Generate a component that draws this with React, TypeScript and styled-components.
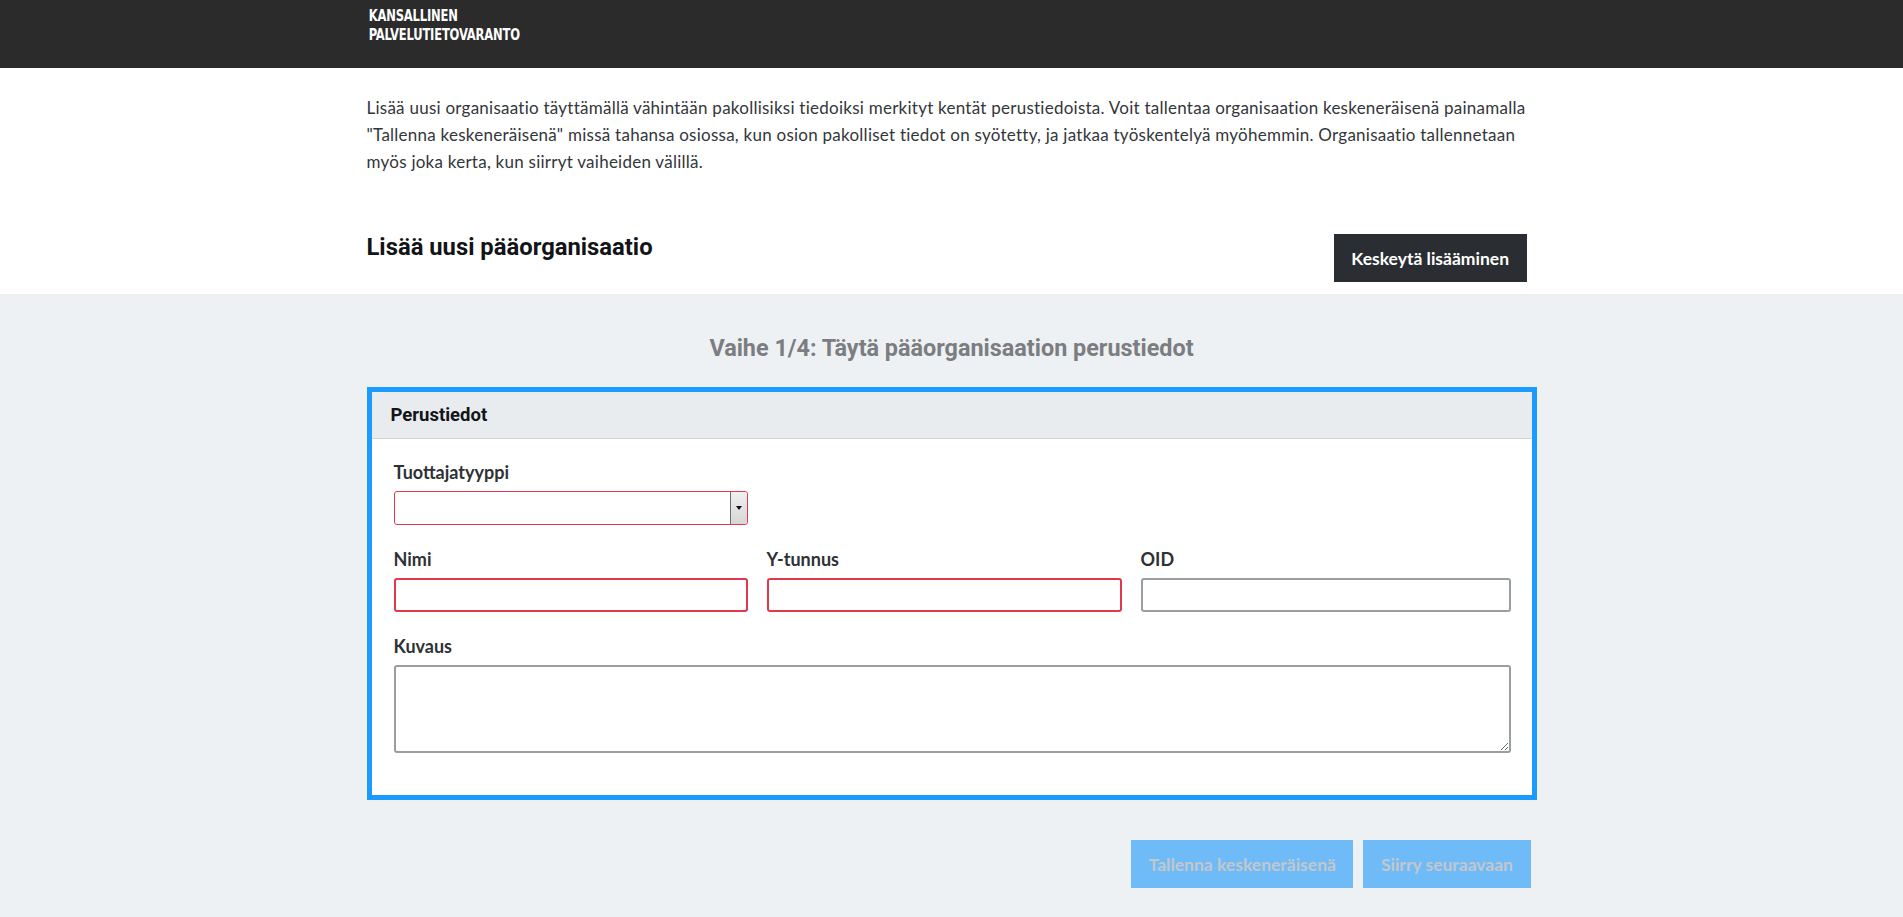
import styled, { createGlobalStyle } from 'styled-components';

const GlobalStyle = createGlobalStyle`
  html, body {
    margin: 0;
    padding: 0;
    background: #edf1f4;
    font-family: Lato, 'Open Sans', sans-serif;
    color: #33363a;
  }
  * {
    box-sizing: border-box;
  }
`;

const Container = styled.div`
  width: 1170px;
  margin: 0 auto;
`;

const TopBar = styled.header`
  height: 68px;
  background: #2b2b2b;
`;

const Logo = styled.div`
  padding: 7px 0 0 2px;
  font-family: 'Liberation Sans Narrow', 'DejaVu Sans Condensed', sans-serif;
  font-weight: 700;
  font-size: 15px;
  line-height: 19px;
  letter-spacing: -0.2px;
  color: #ffffff;
  text-transform: uppercase;
  transform: scaleX(0.855);
  transform-origin: left top;
`;

const IntroSection = styled.section`
  background: #ffffff;
  padding-bottom: 12px;
`;

const Intro = styled.p`
  margin: 0;
  padding-top: 26px;
  font-size: 17px;
  letter-spacing: 0.25px;
  line-height: 27px;
  color: #33363a;
`;

const TitleRow = styled.div`
  display: flex;
  justify-content: space-between;
  align-items: flex-start;
  margin-top: 59px;
  padding-right: 10px;
`;

const PageTitle = styled.h1`
  margin: 0;
  font-family: Roboto, sans-serif;
  font-weight: 700;
  font-size: 23.8px;
  line-height: 26px;
  color: #121417;
`;

const Button = styled.button<{ variant: 'dark' | 'disabled' }>`
  height: 48px;
  padding: 0 17.5px;
  border: none;
  border-radius: 0;
  font-family: Lato, sans-serif;
  font-weight: 700;
  font-size: 17.5px;
  cursor: ${(p) => (p.variant === 'disabled' ? 'default' : 'pointer')};
  background: ${(p) => (p.variant === 'dark' ? '#2a2d32' : '#6fbbf8')};
  color: ${(p) => (p.variant === 'dark' ? '#ffffff' : '#c3c7cb')};
`;

const Main = styled.main`
  padding-top: 41px;
  padding-bottom: 30px;
`;

const StepTitle = styled.h2`
  margin: 0;
  text-align: center;
  font-family: Roboto, sans-serif;
  font-weight: 700;
  font-size: 23.4px;
  line-height: 26px;
  color: #7b7d80;
`;

const Card = styled.div`
  margin-top: 26px;
  border: 5px solid #1c9bff;
  background: #ffffff;
`;

const CardHeader = styled.div`
  height: 47px;
  padding-left: 19px;
  background: #e9ecef;
  border-bottom: 1px solid #cfd3d7;
  font-family: Roboto, sans-serif;
  font-weight: 700;
  font-size: 18.5px;
  line-height: 46px;
  color: #121417;
`;

const CardBody = styled.div`
  padding: 23px 21px 42px 22px;
  display: flex;
  flex-direction: column;
  gap: 24px;
`;

const FieldRow = styled.div`
  display: grid;
  grid-template-columns: 354px 355px 1fr;
  column-gap: 19px;
`;

const Field = styled.div<{ width?: number }>`
  display: flex;
  flex-direction: column;
  gap: 9px;
  width: ${(p) => (p.width ? `${p.width}px` : 'auto')};
`;

const Label = styled.label`
  font-weight: 700;
  font-size: 18px;
  line-height: 20px;
  color: #2e3135;
`;

const SelectBox = styled.div`
  display: flex;
  height: 34px;
  border: 1px solid #e0384c;
  border-radius: 3px;
  background: #ffffff;
  overflow: hidden;
`;

const SelectValue = styled.div`
  flex: 1;
`;

const SelectArrow = styled.div`
  width: 17px;
  display: flex;
  align-items: center;
  justify-content: center;
  border-left: 1px solid #6d6d6d;
  background: linear-gradient(#f0f0f0, #d6d6d6);

  &::after {
    content: '';
    border-left: 3.5px solid transparent;
    border-right: 3.5px solid transparent;
    border-top: 4px solid #111111;
  }
`;

const TextInput = styled.input<{ invalid?: boolean }>`
  height: 34px;
  width: 100%;
  padding: 0 8px;
  border: 2px solid ${(p) => (p.invalid ? '#e0384c' : '#999ea3')};
  border-radius: 3px;
  font-family: Lato, sans-serif;
  font-size: 16px;
  outline: none;
`;

const TextArea = styled.textarea`
  height: 88px;
  width: 100%;
  padding: 6px 8px;
  border: 2px solid #999ea3;
  border-radius: 3px;
  font-family: Lato, sans-serif;
  font-size: 16px;
  outline: none;
  resize: vertical;
  display: block;
`;

const Actions = styled.div`
  display: flex;
  justify-content: flex-end;
  gap: 10px;
  margin-top: 40px;
  padding-right: 6px;
`;

export default function App() {
  return (
    <>
      <GlobalStyle />
      <TopBar>
        <Container>
          <Logo>
            Kansallinen
            <br />
            Palvelutietovaranto
          </Logo>
        </Container>
      </TopBar>
      <IntroSection>
        <Container>
          <Intro>
            Lisää uusi organisaatio täyttämällä vähintään pakollisiksi tiedoiksi merkityt kentät
            perustiedoista. Voit tallentaa organisaation keskeneräisenä painamalla
            <br />
            "Tallenna keskeneräisenä" missä tahansa osiossa, kun osion pakolliset tiedot on
            syötetty, ja jatkaa työskentelyä myöhemmin. Organisaatio tallennetaan
            <br />
            myös joka kerta, kun siirryt vaiheiden välillä.
          </Intro>
          <TitleRow>
            <PageTitle>Lisää uusi pääorganisaatio</PageTitle>
            <Button variant="dark">Keskeytä lisääminen</Button>
          </TitleRow>
        </Container>
      </IntroSection>
      <Main>
        <Container>
          <StepTitle>Vaihe 1/4: Täytä pääorganisaation perustiedot</StepTitle>
          <Card>
            <CardHeader>Perustiedot</CardHeader>
            <CardBody>
              <Field width={354}>
                <Label>Tuottajatyyppi</Label>
                <SelectBox>
                  <SelectValue />
                  <SelectArrow />
                </SelectBox>
              </Field>
              <FieldRow>
                <Field>
                  <Label>Nimi</Label>
                  <TextInput invalid />
                </Field>
                <Field>
                  <Label>Y-tunnus</Label>
                  <TextInput invalid />
                </Field>
                <Field>
                  <Label>OID</Label>
                  <TextInput />
                </Field>
              </FieldRow>
              <Field>
                <Label>Kuvaus</Label>
                <TextArea />
              </Field>
            </CardBody>
          </Card>
          <Actions>
            <Button variant="disabled">Tallenna keskeneräisenä</Button>
            <Button variant="disabled">Siirry seuraavaan</Button>
          </Actions>
        </Container>
      </Main>
    </>
  );
}
